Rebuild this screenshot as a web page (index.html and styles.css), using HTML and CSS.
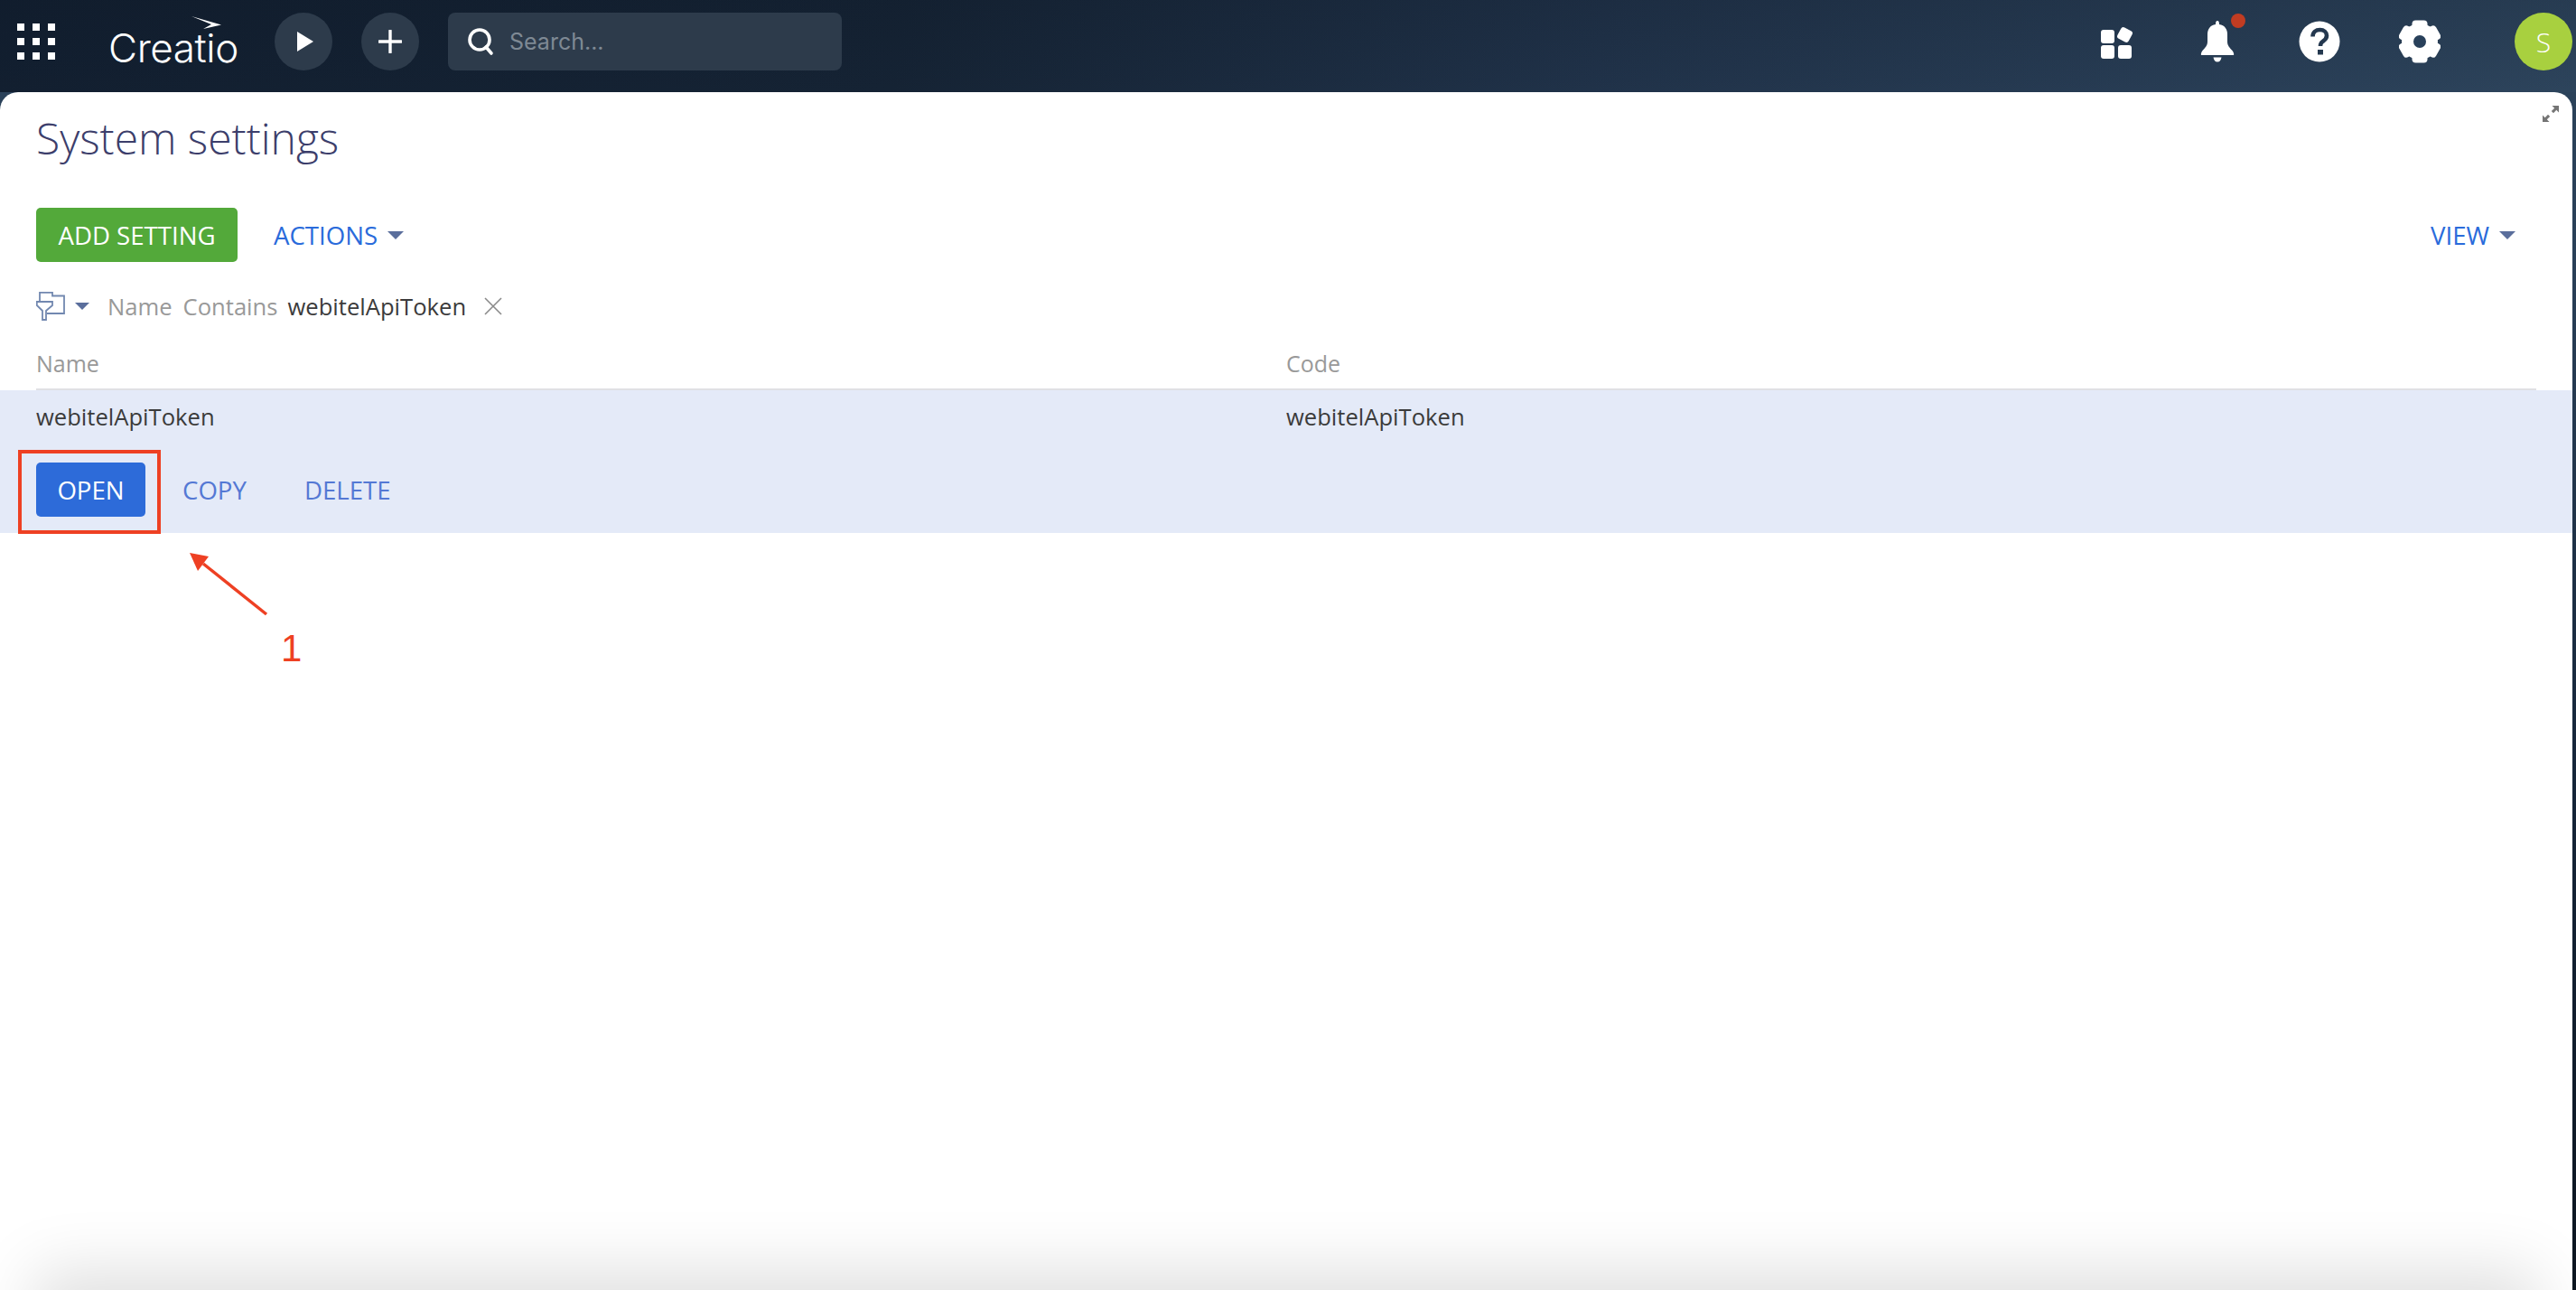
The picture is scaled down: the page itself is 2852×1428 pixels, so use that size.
FILE: index.html
```html
<!DOCTYPE html>
<html lang="en">

<head>
    <meta charset="UTF-8">
    <title>System settings</title>
    <link rel="stylesheet" href="styles.css">
</head>

<body>
    <header class="topbar">
        <svg class="apps-grid" width="42" height="40" viewBox="0 0 42 40">
            <g fill="#fff">
                <rect x="0" y="0" width="8" height="8" /><rect x="17" y="0" width="8" height="8" /><rect x="34" y="0" width="8" height="8" />
                <rect x="0" y="16" width="8" height="8" /><rect x="17" y="16" width="8" height="8" /><rect x="34" y="16" width="8" height="8" />
                <rect x="0" y="32" width="8" height="8" /><rect x="17" y="32" width="8" height="8" /><rect x="34" y="32" width="8" height="8" />
            </g>
        </svg>
        <div class="logo">
            <span>Creatio</span>
            <svg class="logo-mark" width="34" height="15" viewBox="0 0 34 15">
                <path d="M0 0 L33 9.500 L13 14 L22 9 Z" fill="#fff" />
            </svg>
        </div>
        <button class="round-btn round-play">
            <svg width="20" height="22" viewBox="0 0 20 22"><path d="M1 0 L19 11 L1 22 Z" fill="#fff" /></svg>
        </button>
        <button class="round-btn round-add">
            <svg width="26" height="26" viewBox="0 0 26 26"><path d="M13 1 V25 M1 13 H25" stroke="#fff" stroke-width="3.4" stroke-linecap="round" /></svg>
        </button>
        <div class="search">
            <svg width="30" height="32" viewBox="0 0 30 32"><circle cx="14" cy="14" r="11" fill="none" stroke="#fff" stroke-width="3.6" /><path d="M21 22 L27 29" stroke="#fff" stroke-width="3.6" stroke-linecap="round" /></svg>
            <span>Search...</span>
        </div>
        <div class="topbar-right">
            <svg class="tool-icon" width="38" height="38" viewBox="0 0 38 38">
                <g fill="#fff">
                    <rect x="1" y="6" width="15" height="15" rx="3" />
                    <rect x="1" y="23" width="15" height="15" rx="3" />
                    <rect x="20" y="23" width="15" height="15" rx="3" />
                    <rect x="20.500" y="4.500" width="14" height="14" rx="3" transform="rotate(28 27.500 11.500)" />
                </g>
            </svg>
            <div class="bell">
                <svg width="38" height="46" viewBox="0 0 38 46">
                    <path d="M19 0 C20.500 0 21 1.500 21 4 C27 5 30 9 30 15 L30 23 C30 28 33 30 35.500 33 C37 35 37.500 37 37 38 L1 38 C0.500 37 1 35 2.500 33 C5 30 8 28 8 23 L8 15 C8 9 11 5 17 4 C17 1.500 17.500 0 19 0 Z M14.500 40.500 L23.500 40.500 C23 43.500 21.500 45.500 19 45.500 C16.500 45.500 15 43.500 14.500 40.500 Z" fill="#fff" />
                </svg>
                <span class="bell-dot"></span>
            </div>
            <svg class="tool-icon help-icon" width="46" height="46" viewBox="0 0 46 46">
                <circle cx="23" cy="23" r="22.500" fill="#fff" />
                <path d="M15.500 17.500 C15.500 12.500 19 10 23.500 10 C28 10 31 12.800 31 16.500 C31 20 28.500 21.500 26.500 23 C24.700 24.300 24 25.500 24 28" fill="none" stroke="#24384f" stroke-width="4.600" />
                <rect x="21" y="32" width="6" height="5.500" fill="#24384f" />
            </svg>
            <svg class="tool-icon gear-icon" width="46" height="48" viewBox="0 0 46 48">
                <g fill="#fff">
                    <circle cx="23" cy="24" r="20" />
                    <rect x="14.500" y="0.500" width="17" height="12" rx="4" />
                    <rect x="14.500" y="0.500" width="17" height="12" rx="4" transform="rotate(60 23 24)" />
                    <rect x="14.500" y="0.500" width="17" height="12" rx="4" transform="rotate(120 23 24)" />
                    <rect x="14.500" y="0.500" width="17" height="12" rx="4" transform="rotate(180 23 24)" />
                    <rect x="14.500" y="0.500" width="17" height="12" rx="4" transform="rotate(240 23 24)" />
                    <rect x="14.500" y="0.500" width="17" height="12" rx="4" transform="rotate(300 23 24)" />
                </g>
                <circle cx="23" cy="24" r="7" fill="#28405a" />
            </svg>
            <div class="avatar">S</div>
        </div>
    </header>

    <main class="panel">
        <svg class="expand-icon" width="18" height="18" viewBox="0 0 18 18">
            <path d="M10.500 0 H18 V7.500 L15.300 4.800 L12 8.200 L9.800 6 L13.200 2.700 Z M7.500 18 H0 V10.500 L2.700 13.200 L6 9.800 L8.200 12 L4.800 15.300 Z" fill="#757575" />
        </svg>
        <h1 class="page-title">System settings</h1>

        <div class="toolbar">
            <a class="btn btn-green" href="#">ADD SETTING</a>
            <a class="link-btn actions-btn" href="#">ACTIONS<i class="caret"></i></a>
            <a class="link-btn view-btn" href="#">VIEW<i class="caret"></i></a>
        </div>

        <div class="filter-row">
            <svg width="32" height="32" viewBox="0 0 32 32">
                <path d="M4 10 V0.800 H18 V4.500 H31 V24 H12" fill="none" stroke="#7288b0" stroke-width="1.800" />
                <path d="M0.800 11 H18 V15 L11 21 V31 H7 V21 L0.800 15 Z" fill="#fff" stroke="#7288b0" stroke-width="1.800" />
            </svg>
            <i class="caret filter-caret"></i>
            <span class="filter-label">Name</span>
            <span class="filter-label">Contains</span>
            <span class="filter-value">webitelApiToken</span>
            <svg class="filter-clear" width="20" height="20" viewBox="0 0 20 20"><path d="M1 1 L19 19 M19 1 L1 19" stroke="#8a8a8a" stroke-width="1.600" /></svg>
        </div>

        <div class="table-head">
            <span>Name</span>
            <span>Code</span>
        </div>
        <div class="table-row">
            <div class="row-cells">
                <span>webitelApiToken</span>
                <span>webitelApiToken</span>
            </div>
            <div class="row-actions">
                <a class="btn btn-blue" href="#">OPEN</a>
                <a class="row-link" href="#">COPY</a>
                <a class="row-link" href="#">DELETE</a>
            </div>
        </div>

        <div class="bottom-shade"></div>

        <!-- разметка поверх скриншота -->
        <div class="note-box"></div>
        <svg class="note-arrow" width="100" height="84" viewBox="0 0 100 84">
            <path d="M89 70 L19 14" stroke="#ee4023" stroke-width="3.500" />
            <path d="M4 2 L25 6 L13 22 Z" fill="#ee4023" />
        </svg>
        <span class="note-num">1</span>
    </main>
</body>

</html>
```

FILE: styles.css
```css
* {
    box-sizing: border-box;
}

html,
body {
    height: 100%;
}

body {
    margin: 0;
    display: flex;
    flex-direction: column;
    overflow: hidden;
    font-family: "Open Sans", "Liberation Sans", sans-serif;
    background: linear-gradient(to bottom, #2c435b 0, #2a4058 20%, #16263a 60%, #0c1520 100%);
}

a {
    text-decoration: none;
}

.topbar {
    display: flex;
    align-items: center;
    flex: none;
    height: 102px;
    padding: 0 4px 10px 19px;
    background: linear-gradient(to bottom, rgba(10, 18, 30, 0.16), rgba(10, 18, 30, 0)),
        linear-gradient(100deg, #121f30 0, #152334 35%, #203249 62%, #2d445c 100%);
}

.apps-grid {
    flex: none;
}

.logo {
    position: relative;
    flex: none;
    width: 144px;
    margin-top: 14px;
    margin-left: 59px;
    color: #fff;
    font-family: Inter, sans-serif;
    font-weight: 300;
    font-size: 44px;
    letter-spacing: -0.4px;
    line-height: 50px;
}

.logo-mark {
    position: absolute;
    top: -10px;
    left: 92px;
}

.round-btn {
    display: flex;
    align-items: center;
    justify-content: center;
    flex: none;
    width: 64px;
    height: 64px;
    padding: 0;
    border: 0;
    border-radius: 50%;
    background: #2d3b4b;
}

.round-play {
    margin-left: 40px;
}

.round-play svg {
    margin-left: 4px;
}

.round-add {
    margin-left: 32px;
}

.search {
    display: flex;
    align-items: center;
    gap: 17px;
    flex: none;
    width: 436px;
    height: 64px;
    margin-left: 32px;
    padding-left: 21px;
    border-radius: 8px;
    background: #2d3b4b;
    color: #7e8994;
    font-family: Inter, sans-serif;
    font-size: 25px;
}

.topbar-right {
    display: flex;
    align-items: center;
    margin-left: auto;
}

.tool-icon {
    display: block;
    flex: none;
}

.bell {
    position: relative;
    width: 38px;
    height: 46px;
    margin-left: 73px;
}

.bell svg {
    display: block;
}

.bell-dot {
    position: absolute;
    top: -8px;
    right: -12px;
    width: 16px;
    height: 16px;
    border-radius: 50%;
    background: #c13c22;
}

.help-icon {
    margin-left: 71px;
}

.gear-icon {
    margin-left: 65px;
}

.avatar {
    display: flex;
    align-items: center;
    justify-content: center;
    flex: none;
    width: 64px;
    height: 64px;
    margin-left: 82px;
    border-radius: 50%;
    background: #a8d03f;
    color: #fff;
    font-size: 30px;
    font-weight: 300;
}

.panel {
    position: relative;
    flex: 1;
    margin-right: 4px;
    border-radius: 20px 20px 0 0;
    background: #fff;
    overflow: hidden;
}

.expand-icon {
    position: absolute;
    top: 15px;
    right: 15px;
}

.page-title {
    margin: 0;
    padding: 18px 0 0 40px;
    color: #3c3e6b;
    font-size: 48px;
    font-weight: 300;
    line-height: 66px;
}

.toolbar {
    display: flex;
    align-items: center;
    height: 60px;
    margin-top: 44px;
    padding: 0 63px 0 40px;
}

.btn {
    display: flex;
    align-items: center;
    justify-content: center;
    height: 60px;
    border-radius: 5px;
    color: #fff;
    font-size: 27.6px;
}

.btn-green {
    width: 223px;
    background: #53a93a;
}

.btn-blue {
    width: 121px;
    background: #2d6bd9;
}

.link-btn {
    display: flex;
    align-items: center;
    color: #2a6bdb;
    font-size: 27.6px;
}

.actions-btn {
    margin-left: 40px;
}

.view-btn {
    margin-left: auto;
}

.caret {
    display: block;
    width: 0;
    height: 0;
    margin-left: 11px;
    border-top: 9px solid #5a6e9c;
    border-left: 9px solid transparent;
    border-right: 9px solid transparent;
}

.filter-row {
    display: flex;
    align-items: center;
    height: 32px;
    margin-top: 33px;
    padding-left: 40px;
    font-size: 25.6px;
}

.filter-caret {
    margin-left: 11px;
    border-top-width: 8px;
    border-left-width: 8px;
    border-right-width: 8px;
}

.filter-label {
    margin-left: 12px;
    color: #999;
}

.filter-caret + .filter-label {
    margin-left: 20px;
}

.filter-value {
    margin-left: 11px;
    color: #3b3b3b;
}

.filter-clear {
    margin-left: 20px;
}

.table-head,
.row-cells {
    display: grid;
    grid-template-columns: 1384px 1fr;
}

.table-head {
    height: 77px;
    margin: 0 40px;
    padding-top: 29px;
    border-bottom: 2px solid #e0e0e4;
    color: #999;
    font-size: 25px;
    line-height: 36px;
}

.table-row {
    padding: 10px 40px 18px;
    background: #e4eaf8;
}

.row-cells {
    color: #3b3b3b;
    font-size: 25.6px;
    line-height: 40px;
}

.row-actions {
    display: flex;
    align-items: center;
    margin-top: 30px;
}

.row-link {
    margin-left: 41px;
    color: #5478d4;
    font-size: 27.6px;
}

.row-link + .row-link {
    margin-left: 64px;
}

.bottom-shade {
    position: absolute;
    left: 60px;
    right: 60px;
    bottom: -50px;
    height: 50px;
    box-shadow: 0 0 70px 22px rgba(0, 0, 0, 0.125);
}

.note-box {
    position: absolute;
    top: 396px;
    left: 20px;
    width: 158px;
    height: 93px;
    border: 4px solid #ee4023;
}

.note-arrow {
    position: absolute;
    top: 508px;
    left: 206px;
}

.note-num {
    position: absolute;
    top: 592px;
    left: 311px;
    color: #ee4023;
    font-family: "Liberation Sans", sans-serif;
    font-size: 42px;
    line-height: 48px;
}
```
